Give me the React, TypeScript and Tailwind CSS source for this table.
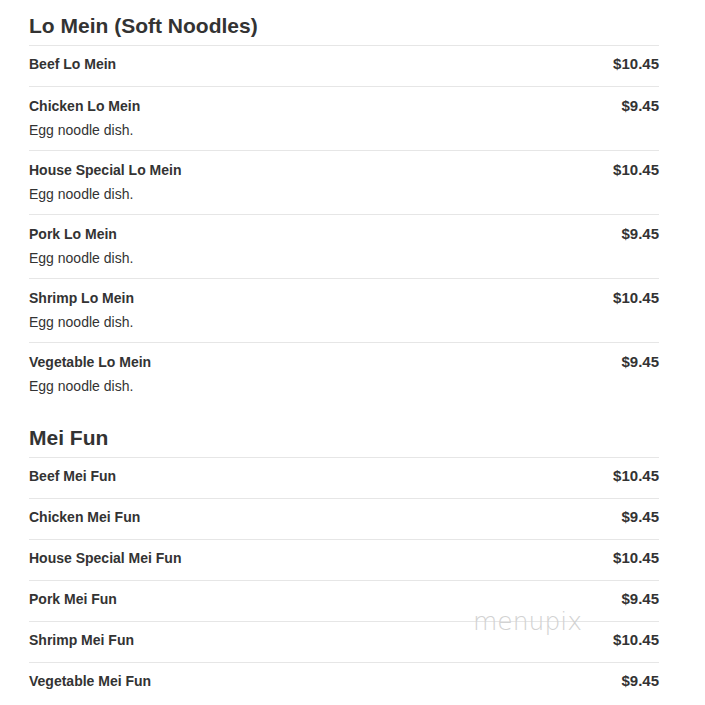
import React from "react";

type Item = { name: string; price: string; desc?: string };

const loMein: Item[] = [
  { name: "Beef Lo Mein", price: "$10.45" },
  { name: "Chicken Lo Mein", price: "$9.45", desc: "Egg noodle dish." },
  { name: "House Special Lo Mein", price: "$10.45", desc: "Egg noodle dish." },
  { name: "Pork Lo Mein", price: "$9.45", desc: "Egg noodle dish." },
  { name: "Shrimp Lo Mein", price: "$10.45", desc: "Egg noodle dish." },
  { name: "Vegetable Lo Mein", price: "$9.45", desc: "Egg noodle dish." },
];

const meiFun: Item[] = [
  { name: "Beef Mei Fun", price: "$10.45" },
  { name: "Chicken Mei Fun", price: "$9.45" },
  { name: "House Special Mei Fun", price: "$10.45" },
  { name: "Pork Mei Fun", price: "$9.45" },
  { name: "Shrimp Mei Fun", price: "$10.45" },
  { name: "Vegetable Mei Fun", price: "$9.45" },
];

function Row({ item }: { item: Item }) {
  return (
    <div className={item.desc ? "border-t border-[#e6e6e6] pt-[9px] pb-[10px]" : "border-t border-[#e6e6e6] pt-[8px] pb-[12px]"}>
      <div className="flex justify-between items-start">
        <div className="text-[14px] leading-[20px] font-bold text-[#333]">{item.name}</div>
        <div className="text-[15px] leading-[20px] font-bold text-[#333]">{item.price}</div>
      </div>
      {item.desc && (
        <div className="mt-[4px] text-[14px] leading-[20px] text-[#333]">{item.desc}</div>
      )}
    </div>
  );
}

function Section({ title, items }: { title: string; items: Item[] }) {
  return (
    <div>
      <h2 className="text-[21px] leading-[26px] font-bold text-[#333] mb-[6px]">{title}</h2>
      {items.map((it) => (
        <Row key={it.name} item={it} />
      ))}
    </div>
  );
}

export default function App() {
  return (
    <div
      className="relative w-[705px] h-[705px] bg-white overflow-hidden"
      style={{ fontFamily: '"Liberation Sans", Arial, sans-serif' }}
    >
      <div className="ml-[29px] w-[630px] pt-[13px] flex flex-col gap-[19px]">
        <Section title="Lo Mein (Soft Noodles)" items={loMein} />
        <Section title="Mei Fun" items={meiFun} />
      </div>
      <div
        className="absolute left-[473px] top-[608px] text-[25px] leading-[28px] text-[#d2d2d2]"
        style={{ fontFamily: '"DejaVu Sans", sans-serif', fontWeight: 200 }}
      >
        menupix
      </div>
    </div>
  );
}
